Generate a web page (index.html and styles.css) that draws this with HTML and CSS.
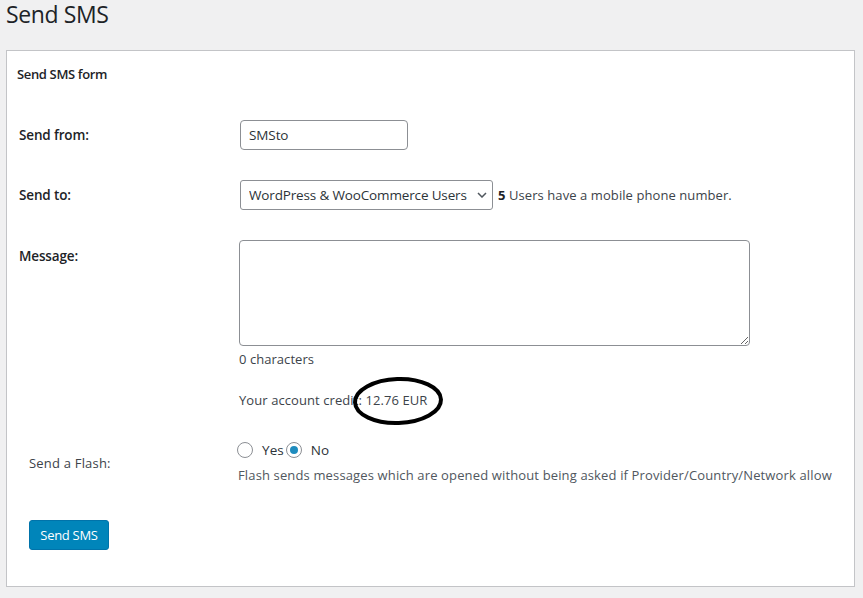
FILE: index.html
```html
<!DOCTYPE html>
<html>
<head>
<meta charset="utf-8">
<title>Send SMS</title>
<link rel="stylesheet" href="styles.css">
</head>
<body>
<h1 class="title">Send SMS</h1>
<div class="panel">
  <h2 class="panel-title">Send SMS form</h2>

  <div class="row row-from">
    <div class="label">Send from:</div>
    <div class="field">
      <input class="text-input" type="text" value="SMSto">
    </div>
  </div>

  <div class="row row-to">
    <div class="label">Send to:</div>
    <div class="field">
      <span class="select-wrap">
        <select class="select"><option>WordPress &amp; WooCommerce Users</option></select>
        <svg class="chevron" width="10" height="6" viewBox="0 0 10 6"><path d="M1 1 L5 5 L9 1" fill="none" stroke="#50575e" stroke-width="1.5"/></svg>
      </span>
      <span class="hint"><b>5</b> Users have a mobile phone number.</span>
    </div>
  </div>

  <div class="row row-msg">
    <div class="label label-msg">Message:</div>
    <div class="field col">
      <textarea class="textarea"></textarea>
      <div class="count">0 characters</div>
      <div class="credit">Your account credit: 12.76 EUR
        <svg class="circle" width="96" height="52" viewBox="0 0 96 52"><ellipse cx="47" cy="25" rx="43" ry="22" fill="none" stroke="#000" stroke-width="4" transform="rotate(-2 47 25)"/></svg>
      </div>
    </div>
  </div>

  <div class="row row-flash">
    <div class="label-flash">Send a Flash:</div>
    <div class="field col">
      <div class="radios">
        <label class="radio-item"><input class="radio" type="radio" name="flash">Yes</label>
        <label class="radio-item"><input class="radio" type="radio" name="flash" checked>No</label>
      </div>
      <div class="description">Flash sends messages which are opened without being asked if Provider/Country/Network allow</div>
    </div>
  </div>

  <button class="btn" type="button">Send SMS</button>
</div>
</body>
</html>
```

FILE: styles.css
```css
html, body {
  margin: 0;
  padding: 0;
  background: #f0f0f1;
}
body {
  font-family: "Open Sans", "Noto Sans", sans-serif;
  font-size: 13px;
  color: #3c434a;
  padding: 0 8px 0 6px;
}
.title {
  margin: 0;
  padding-top: 1px;
  height: 49px;
  font-size: 23px;
  font-weight: 400;
  line-height: 27px;
  color: #1d2327;
  letter-spacing: -0.4px;
}
.panel {
  background: #fff;
  border: 1px solid #c3c4c7;
  padding: 14px 12px 37px 12px;
  height: 537px;
  box-sizing: border-box;
}
.panel-title {
  margin: 0 0 0 -2px;
  font-size: 13px;
  font-weight: 600;
  line-height: 18px;
  color: #1d2327;
  letter-spacing: -0.35px;
}
.row {
  display: flex;
  letter-spacing: 0.08px;
}
.label {
  width: 220px;
  flex: none;
  font-size: 13.5px;
  font-weight: 600;
  color: #1d2327;
  line-height: 18px;
  letter-spacing: -0.15px;
}
.row-from, .row-to {
  align-items: center;
  height: 30px;
}
.row-from { margin-top: 37px; }
.row-to { margin-top: 30px; }
.row-msg { margin-top: 30px; align-items: flex-start; }
.label-msg { padding-top: 7px; }
.field {
  display: flex;
  align-items: center;
}
.field.col {
  flex-direction: column;
  align-items: flex-start;
}
.text-input {
  box-sizing: border-box;
  width: 168px;
  height: 30px;
  margin: 0 0 0 1px;
  padding: 0 8px;
  border: 1px solid #8c8f94;
  border-radius: 4px;
  font-family: inherit;
  font-size: 13.5px;
  letter-spacing: -0.1px;
  color: #2c3338;
  background: #fff;
}
.select-wrap {
  position: relative;
  display: inline-block;
  margin-left: 1px;
}
.select {
  -webkit-appearance: none;
  appearance: none;
  box-sizing: border-box;
  width: 253px;
  height: 30px;
  margin: 0;
  padding: 0 24px 0 8px;
  border: 1px solid #8c8f94;
  border-radius: 3px;
  font-family: inherit;
  font-size: 13.5px;
  letter-spacing: -0.15px;
  color: #2c3338;
  background: #fff;
  display: block;
}
.chevron {
  position: absolute;
  right: 6px;
  top: 12px;
}
.hint {
  margin-left: 5px;
  font-size: 13px;
  color: #3c434a;
}
.hint b { font-weight: 700; color: #1d2327; }
.textarea {
  box-sizing: border-box;
  width: 511px;
  height: 106px;
  margin: 0;
  border: 1px solid #8c8f94;
  border-radius: 4px;
  font-family: inherit;
  display: block;
}
.count {
  margin-top: 4px;
  line-height: 18px;
  letter-spacing: 0.05px;
}
.credit {
  position: relative;
  margin-top: 23px;
  line-height: 18px;
}
.circle {
  position: absolute;
  left: 112px;
  top: -15px;
}
.row-flash {
  margin-top: 32px;
  align-items: center;
}
.label-flash {
  width: 209px;
  padding-left: 10px;
  flex: none;
  font-size: 13px;
  line-height: 18px;
  letter-spacing: 0.2px;
}
.radios {
  display: flex;
  align-items: center;
  height: 18px;
  font-size: 13.5px;
}
.radio-item {
  display: flex;
  align-items: center;
  color: #2c3338;
}
.radio-item + .radio-item { margin-left: 2px; }
.radio {
  -webkit-appearance: none;
  appearance: none;
  box-sizing: border-box;
  width: 16px;
  height: 16px;
  margin: 0 9px 0 0;
  border: 1px solid #8c8f94;
  border-radius: 50%;
  background: #fff;
  position: relative;
}
.radio-item:first-child .radio { margin-left: -1px; }
.radio:checked::before {
  content: "";
  position: absolute;
  left: 3px;
  top: 3px;
  width: 8px;
  height: 8px;
  border-radius: 50%;
  background: #1e8cbe;
}
.description {
  margin-top: 7px;
  line-height: 18px;
  color: #50575e;
  letter-spacing: 0.14px;
}
.btn {
  margin: 36px 0 0 10px;
  width: 80px;
  height: 30px;
  padding: 0;
  background: #0085ba;
  border: 1px solid #0073aa;
  border-radius: 3px;
  color: #fff;
  font-family: inherit;
  font-size: 13px;
  letter-spacing: -0.3px;
  cursor: pointer;
}
```
